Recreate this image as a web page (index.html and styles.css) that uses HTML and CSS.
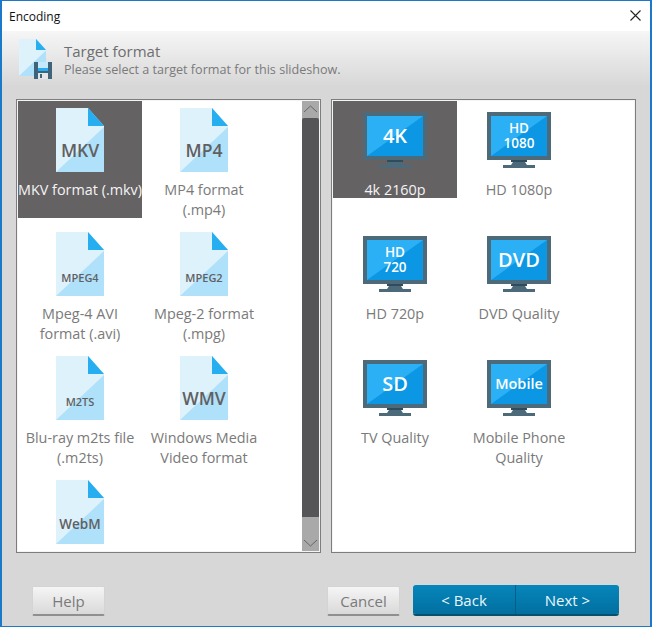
FILE: index.html
```html
<!DOCTYPE html>
<html lang="en">
<head>
<meta charset="utf-8">
<title>Encoding</title>
<link rel="stylesheet" href="styles.css">
</head>
<body>
<svg class="defs" width="0" height="0" aria-hidden="true">
  <symbol id="file" viewBox="0 0 48 64">
    <path d="M0 0H32L48 18V64H0Z" fill="#b0e1fa"/>
    <path d="M0 0H32V18H48V19L0 64Z" fill="#def2fc"/>
    <path d="M32 0L48 18H32Z" fill="#27aef0"/>
  </symbol>
  <symbol id="monitor" viewBox="0 0 64 56">
    <rect width="64" height="48" fill="#4d6a7b"/>
    <rect x="4" y="4" width="56" height="40" fill="#0b97e3"/>
    <path d="M4 4H60L4 44Z" fill="#2bb0f5"/>
    <rect x="24" y="48" width="16" height="2" fill="#2f4c5f"/>
    <path d="M26 50H38L40 53H24Z" fill="#4d6a7b"/>
    <rect x="16" y="53" width="32" height="3" fill="#4d6a7b"/>
  </symbol>
</svg>
<main class="dialog">
  <header class="titlebar">
    <span class="title">Encoding</span>
    <svg class="close" width="11" height="11" viewBox="0 0 11 11"><path d="M0.5 0.5L10.5 10.5M10.5 0.5L0.5 10.5" stroke="#222" stroke-width="1.1" fill="none"/></svg>
  </header>
  <section class="banner">
    <svg class="banner-icon" width="40" height="42" viewBox="0 0 40 42">
      <path d="M3 0H20L30 11V37H3Z" fill="#b0e1fa"/>
      <path d="M3 0H20V11H30V11.5L3 37Z" fill="#def2fc"/>
      <path d="M20 0L30 11H20Z" fill="#27aef0"/>
      <path d="M18 23H36V40H18Z" fill="#3f6378"/>
      <rect x="22" y="23" width="10" height="6" fill="#c5e9fb"/>
      <rect x="22" y="29" width="10" height="3" fill="#27aef0"/>
      <rect x="22" y="34" width="10" height="6" fill="#e2e6e8"/>
      <rect x="24" y="35" width="2" height="4" fill="#3f6378"/>
    </svg>
    <div>
      <h1 class="banner-title">Target format</h1>
      <p class="banner-sub">Please select a target format for this slideshow.</p>
    </div>
  </section>
  <section class="panels">
    <div class="panel">
      <div class="grid grid-files">
        <div class="item selected"><svg class="ico-file" viewBox="0 0 48 64"><use href="#file"/><text x="24" y="49" class="t t-lg">MKV</text></svg><span class="tight">MKV format (.mkv)</span></div>
        <div class="item"><svg class="ico-file" viewBox="0 0 48 64"><use href="#file"/><text x="24" y="49" class="t t-lg">MP4</text></svg><span>MP4 format (.mp4)</span></div>
        <div class="item"><svg class="ico-file" viewBox="0 0 48 64"><use href="#file"/><text x="24" y="50" class="t t-sm">MPEG4</text></svg><span>Mpeg-4 AVI format (.avi)</span></div>
        <div class="item"><svg class="ico-file" viewBox="0 0 48 64"><use href="#file"/><text x="24" y="50" class="t t-sm">MPEG2</text></svg><span>Mpeg-2 format (.mpg)</span></div>
        <div class="item"><svg class="ico-file" viewBox="0 0 48 64"><use href="#file"/><text x="24" y="50" class="t t-sm">M2TS</text></svg><span>Blu-ray m2ts file (.m2ts)</span></div>
        <div class="item"><svg class="ico-file" viewBox="0 0 48 64"><use href="#file"/><text x="24" y="49" class="t t-lg">WMV</text></svg><span>Windows Media Video format</span></div>
        <div class="item"><svg class="ico-file" viewBox="0 0 48 64"><use href="#file"/><text x="24" y="49" class="t t-md">WebM</text></svg></div>
      </div>
      <div class="scrollbar">
        <div class="sb-btn"><svg width="17" height="17" viewBox="0 0 17 17"><path d="M2 11L8.5 5L15 11" stroke="#666" fill="none"/></svg></div>
        <div class="sb-thumb"></div>
        <div class="sb-track"></div>
        <div class="sb-btn"><svg width="17" height="17" viewBox="0 0 17 17"><path d="M2 6L8.5 12L15 6" stroke="#666" fill="none"/></svg></div>
      </div>
    </div>
    <div class="panel">
      <div class="grid grid-res">
        <div class="item item-res selected"><svg class="ico-mon" viewBox="0 0 64 56"><use href="#monitor"/><text x="32" y="31" class="m m-lg">4K</text></svg><span>4k 2160p</span></div>
        <div class="item item-res"><svg class="ico-mon" viewBox="0 0 64 56"><use href="#monitor"/><text class="m m-sm"><tspan x="32" y="21">HD</tspan><tspan x="32" y="36">1080</tspan></text></svg><span>HD 1080p</span></div>
        <div class="item item-res"><svg class="ico-mon" viewBox="0 0 64 56"><use href="#monitor"/><text class="m m-sm"><tspan x="32" y="21">HD</tspan><tspan x="32" y="36">720</tspan></text></svg><span>HD 720p</span></div>
        <div class="item item-res"><svg class="ico-mon" viewBox="0 0 64 56"><use href="#monitor"/><text x="32" y="31" class="m m-lg">DVD</text></svg><span>DVD Quality</span></div>
        <div class="item item-res"><svg class="ico-mon" viewBox="0 0 64 56"><use href="#monitor"/><text x="32" y="31" class="m m-lg">SD</text></svg><span>TV Quality</span></div>
        <div class="item item-res"><svg class="ico-mon" viewBox="0 0 64 56"><use href="#monitor"/><text x="32" y="29" class="m m-md">Mobile</text></svg><span>Mobile Phone Quality</span></div>
      </div>
    </div>
  </section>
  <footer class="actions">
    <button class="btn" type="button">Help</button>
    <div class="spacer"></div>
    <button class="btn" type="button">Cancel</button>
    <div class="split">
      <button class="btn-blue" type="button">&lt; Back</button>
      <button class="btn-blue btn-blue-next" type="button">Next &gt;</button>
    </div>
  </footer>
</main>
</body>
</html>
```
FILE: styles.css
```css
* { box-sizing: border-box; }
html, body { margin: 0; padding: 0; }
body { width: 652px; height: 627px; overflow: hidden; font-family: "Open Sans", "Noto Sans", sans-serif; }
.defs { position: absolute; }
.dialog {
  width: 652px; height: 627px;
  border: 1px solid #1c78c8; border-left-width: 2px; border-right-width: 2px; border-bottom-width: 1px;
  background: #d7d7d7;
  display: flex; flex-direction: column;
}
.titlebar { height: 30px; flex: none; background: #fff; display: flex; align-items: center; justify-content: space-between; padding: 0 9px 0 7px; }
.title { font-size: 12px; color: #111; }
.close { display: block; margin-top: -2px; }
.banner {
  height: 54px; flex: none; padding: 8px 0 0 14px;
  background: linear-gradient(#f6f6f6, #d8d8d8);
  display: flex; gap: 8px;
}
.banner-icon { flex: none; }
.banner-title { margin: 2px 0 0; font-size: 15px; font-weight: 400; line-height: 20px; color: #6e6e6e; }
.banner-sub { margin: 1px 0 0; font-size: 12.6px; line-height: 16px; color: #7a7a7a; }
.panels { display: flex; gap: 10px; padding: 14px 0 0 14px; height: 470px; flex: none; }
.panel { width: 305px; height: 454px; background: #fff; border: 1px solid #7d7d7d; padding: 1px; outline: 1px solid #f4f4f4; outline-offset: -2px; display: flex; justify-content: space-between; }
.grid { display: grid; grid-template-columns: 124px 124px; grid-auto-rows: 124px; }
.item { width: 124px; height: 117px; display: flex; flex-direction: column; align-items: center; font-size: 14.4px; line-height: 20px; color: #7a7a7a; text-align: center; padding-top: 7px; }
.item-res { height: 97px; padding-top: 11px; }
.item span { display: block; margin-top: 8px; }
.item-res span { margin-top: 12px; }
.item .tight { white-space: nowrap; }
.selected { background: #656264; color: #f4f4f4; }
.ico-file { width: 48px; height: 64px; flex: none; display: block; }
.ico-mon { width: 64px; height: 56px; flex: none; display: block; }
.t { text-anchor: middle; font-weight: 600; fill: #606062; font-family: "Open Sans", sans-serif; }
.t-lg { font-size: 17.5px; }
.t-md { font-size: 13.5px; }
.t-sm { font-size: 11px; }
.m { text-anchor: middle; font-weight: 600; fill: #fff; font-family: "Open Sans", sans-serif; }
.m-lg { font-size: 20px; }
.m-md { font-size: 14.5px; }
.m-sm { font-size: 13.5px; }
.scrollbar { width: 17px; height: 450px; background: #a9a9a9; display: flex; flex-direction: column; flex: none; }
.sb-btn { height: 17px; flex: none; }
.sb-btn svg { display: block; }
.sb-thumb { height: 399px; background: #555558; flex: none; border-radius: 2px 2px 0 0; }
.sb-track { flex: 1; }
.actions { display: flex; align-items: flex-end; padding: 0 31px 0 30px; height: 31px; margin-top: 30px; flex: none; gap: 13px; }
.spacer { flex: 1; }
.btn {
  width: 73px; height: 30px; font: 400 15px "Open Sans", sans-serif; color: #7a7a7a;
  border: 1px solid #d4d4d4; border-bottom: 2px solid #8f8f8f; border-radius: 2px;
  background: linear-gradient(#f5f5f5, #d9d9d9); padding: 1px 0 0;
}
.split { display: flex; width: 206px; height: 31px; border-radius: 3px; overflow: hidden; border-bottom: 2px solid #04506f; }
.btn-blue { flex: 1; border: 0; padding: 1px 0 0; font: 400 15px "Open Sans", sans-serif; color: #eaf6fb; background: linear-gradient(#0686bb, #026f9f); }
.btn-blue-next { border-left: 1px solid #035f8a; flex: none; width: 104px; }
```
